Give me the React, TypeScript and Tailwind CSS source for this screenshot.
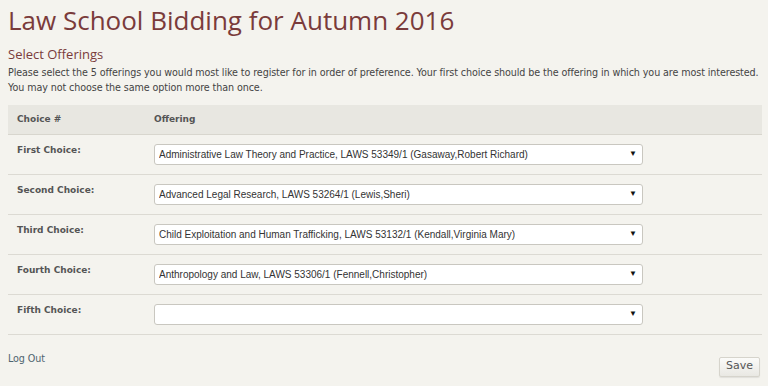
import React from 'react';

const choices = [
    { label: 'First Choice:', value: 'Administrative Law Theory and Practice, LAWS 53349/1 (Gasaway,Robert Richard)' },
    { label: 'Second Choice:', value: 'Advanced Legal Research, LAWS 53264/1 (Lewis,Sheri)' },
    { label: 'Third Choice:', value: 'Child Exploitation and Human Trafficking, LAWS 53132/1 (Kendall,Virginia Mary)' },
    { label: 'Fourth Choice:', value: 'Anthropology and Law, LAWS 53306/1 (Fennell,Christopher)' },
    { label: 'Fifth Choice:', value: '' },
];

function FakeSelect({ value }: { value: string }) {
    return (
        <div className="flex h-[21px] w-[489px] items-center justify-between rounded-[3px] border border-[#c9c7c0] bg-white pl-[4px] pr-[5px] font-['Liberation_Sans',Arial,sans-serif] text-[10px] text-[#333]">
            <span className="truncate">{value}</span>
            <span className="text-[8px] leading-none text-[#111]">▼</span>
        </div>
    );
}

export default function App() {
    return (
        <div className="min-h-[386px] bg-[#f4f3ee] px-[8px] font-['DejaVu_Sans',Verdana,sans-serif] text-[#444]">
            <h1 className="pt-[3px] font-['Open_Sans',sans-serif] text-[26px] leading-[34px] text-[#7a3b3b]">
                Law School Bidding for Autumn 2016
            </h1>
            <h2 className="mt-[8px] font-['Open_Sans',sans-serif] text-[13px] leading-[18px] text-[#7a3b3b]">Select Offerings</h2>
            <p className="mt-[2px] text-[9.6px] leading-[15px] tracking-[-0.1px] text-[#444]">
                Please select the 5 offerings you would most like to register for in order of preference. Your first choice should be the offering in which you are most interested. You may not choose the same option more than once.
            </p>
            <table className="mt-[10px] w-[754px] border-collapse text-[9px]">
                <thead>
                    <tr className="border-b border-[#d8d6ce] bg-[#e8e7e1]">
                        <th className="h-[29px] w-[146px] pl-[9px] text-left font-bold text-[#555]">Choice #</th>
                        <th className="text-left font-bold text-[#555]">Offering</th>
                    </tr>
                </thead>
                <tbody>
                    {choices.map((c) => (
                        <tr key={c.label} className="border-b border-[#dcdad3]">
                            <td className="h-[40px] pl-[9px] align-top pt-[9px] font-bold text-[#555]">{c.label}</td>
                            <td className="align-top pt-[9px]">
                                <FakeSelect value={c.value} />
                            </td>
                        </tr>
                    ))}
                </tbody>
            </table>
            <div className="mt-[17px] flex items-start justify-between">
                <a className="text-[9.6px] tracking-[-0.1px] text-[#4f6470]">Log Out</a>
                <button className="mt-[5px] h-[20px] w-[41px] rounded-[2px] border border-[#d6d4cc] bg-gradient-to-b from-[#fbfbf9] to-[#e9e8e3] text-[11px] text-[#555] shadow-[0_1px_1px_rgba(0,0,0,0.08)]">
                    Save
                </button>
            </div>
        </div>
    );
}
